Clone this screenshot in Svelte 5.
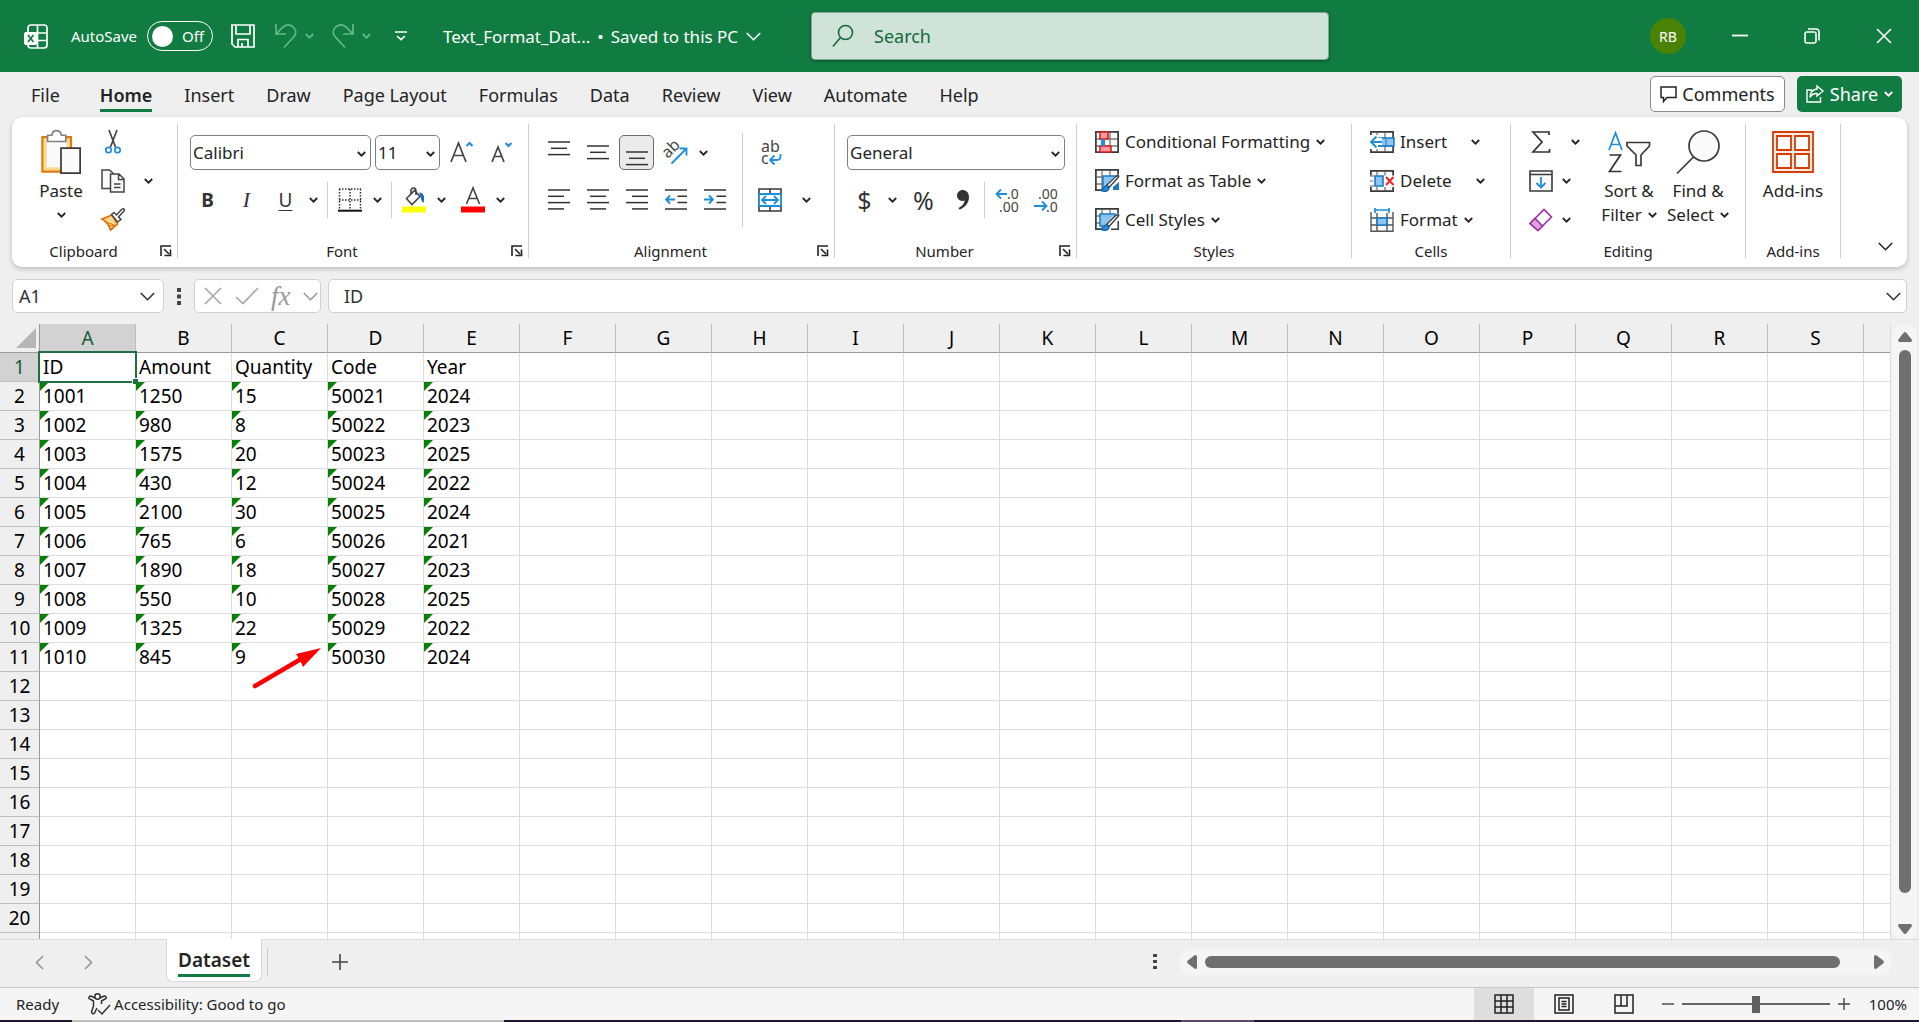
<script lang="ts">
    const tabs = ["File", "Home", "Insert", "Draw", "Page Layout", "Formulas", "Data", "Review", "View", "Automate", "Help"];
    const columns = "ABCDEFGHIJKLMNOPQRST".split("");
    const data = [
        ["ID", "Amount", "Quantity", "Code", "Year"],
        ["1001", "1250", "15", "50021", "2024"],
        ["1002", "980", "8", "50022", "2023"],
        ["1003", "1575", "20", "50023", "2025"],
        ["1004", "430", "12", "50024", "2022"],
        ["1005", "2100", "30", "50025", "2024"],
        ["1006", "765", "6", "50026", "2021"],
        ["1007", "1890", "18", "50027", "2023"],
        ["1008", "550", "10", "50028", "2025"],
        ["1009", "1325", "22", "50029", "2022"],
        ["1010", "845", "9", "50030", "2024"],
    ];
    const rows = Array.from({ length: 21 }, (_, i) => i);

    let activeTab = $state("Home");
    let selected = $state({ row: 0, col: 0 });
    let autosave = $state(false);
    let zoom = $state(50);

    let cellName = $derived(columns[selected.col] + (selected.row + 1));
    let cellValue = $derived(data[selected.row]?.[selected.col] ?? "");
</script>

{#snippet chevron()}
    <svg class="chev" width="9" height="6" viewBox="0 0 9 6"><path d="M.8 1 4.5 4.7 8.2 1" /></svg>
{/snippet}

{#snippet bigChevron()}
    <svg class="chev thin" width="15" height="9" viewBox="0 0 15 9"><path d="M.8 1 7.5 7.7 14.2 1" /></svg>
{/snippet}

{#snippet drop(label: string)}
    <button class="drop" aria-label="{label} options">{@render chevron()}</button>
{/snippet}

{#snippet footer(label: string, launcher: boolean)}
    <div class="footer">
        <span>{label}</span>
        {#if launcher}
            <button class="launcher" aria-label="{label} settings">
                <svg width="12" height="12" viewBox="0 0 12 12"><path d="M1 11V1H11M4 4 9 9M10.5 4.5V10.5H4.5" fill="none" stroke="#222" stroke-width="1.6" /></svg>
            </button>
        {/if}
    </div>
{/snippet}

{#snippet lines(y: number, widths: number[], align: string)}
    <svg width="22" height="24" viewBox="0 0 22 24" stroke="#333" stroke-width="1.5">
        {#each widths as w, i}
            {@const x = align === "left" ? 0 : align === "right" ? 22 - w : (22 - w) / 2}
            <path d="M{x} {y + i * 6.3}h{w}" />
        {/each}
    </svg>
{/snippet}

{#snippet tableGrid()}
    <path d="M1 1H23V21H1ZM7 1V21M15 1V21M1 8H23M1 15H23" fill="#fafafa" stroke="#777" stroke-width="1.3" />
    <path d="M.8.8H23.2V21.2H.8Z" fill="none" stroke="#3a3a3a" stroke-width="1.5" />
{/snippet}

{#snippet brushOver()}
    <path d="M24 5 12 17 6 24H24Z" fill="#fff" />
    <path d="M23.4 8.2 14 18.5 11.7 16.2 20.5 7.9C22.5 6.3 24.7 6.3 23.4 8.2Z" fill="#fff" stroke="#3a3a3a" stroke-width="1.3" />
    <path d="M11.4 16.5C8.5 16.8 9.5 20.2 5.8 21.4 9.5 23.2 14 22.5 14 18.8Z" fill="#2b8ad4" stroke="#0f62ad" stroke-width="1.2" />
{/snippet}

<div class="app">
    <header class="title-bar">
        <div class="quick">
            <svg class="logo" width="24" height="25" viewBox="0 0 24 25" fill="none" stroke="#fff" stroke-width="1.7">
                <path d="M4 8V4Q4 1 7 1H20Q23 1 23 4V21Q23 24 20 24H7Q4 24 4 21M4 9H23M13.5 1V24M13 16.5H23" />
                <rect x="0" y="8" width="13" height="13" rx="2" fill="#fff" stroke="none" />
                <path d="M4 11 9.5 18M9.5 11 4 18" stroke="#107c41" />
            </svg>
            <label class="autosave">
                <span>AutoSave</span>
                <input type="checkbox" bind:checked={autosave} />
                <span class="toggle" class:on={autosave}><span class="knob"></span>{autosave ? "On" : "Off"}</span>
            </label>
            <button class="save" aria-label="Save">
                <svg width="24" height="24" viewBox="0 0 24 24" fill="none" stroke="#fff" stroke-width="1.7"><path d="M1 1H23V23H4L1 20ZM5 1V10H19V1M7 23V15.5H17V23M11 19v4" /></svg>
            </button>
            <div class="history">
                <button aria-label="Undo">
                    <svg width="22" height="24" viewBox="0 0 22 24" fill="none" stroke="#63b887" stroke-width="1.7"><path d="M1 0V10H11M1.5 9.5 8 3C15-2.5 24 5 19.5 12L9 23.5" /></svg>
                </button>
                <button aria-label="Undo history">{@render chevron()}</button>
            </div>
            <div class="history">
                <button aria-label="Redo">
                    <svg width="22" height="24" viewBox="0 0 22 24" fill="none" stroke="#63b887" stroke-width="1.7"><path d="M21 0V10H11M20.5 9.5 14 3C7-2.5-2 5 2.5 12L13 23.5" /></svg>
                </button>
                <button aria-label="Redo history">{@render chevron()}</button>
            </div>
            <button class="customize" aria-label="Customize toolbar">
                <svg width="12" height="10" viewBox="0 0 12 10" fill="none" stroke="#fff" stroke-width="1.7"><path d="M0 1H12M2 5 6 8.7 10 5" /></svg>
            </button>
            <button class="file-name">
                <span>Text_Format_Dat...</span>
                <span>•</span>
                <span class="saved">Saved to this PC {@render bigChevron()}</span>
            </button>
        </div>
        <label class="search">
            <svg width="22" height="24" viewBox="0 0 22 24" fill="none" stroke="#17693c" stroke-width="1.6"><circle cx="13.5" cy="8.5" r="7" /><path d="M8.5 13.5 1 22.5" /></svg>
            <input type="text" placeholder="Search" aria-label="Search" />
        </label>
        <div class="window">
            <button class="avatar">RB</button>
            <button aria-label="Minimize"><svg width="16" height="16" viewBox="0 0 16 16"><path d="M0 7.5H16" stroke="#fff" stroke-width="1.8" /></svg></button>
            <button aria-label="Restore">
                <svg width="16" height="16" viewBox="0 0 16 16" fill="none" stroke="#fff" stroke-width="1.6"><rect x="1" y="4" width="11" height="11" rx="2" /><path d="M4 1H12Q15 1 15 4V12.5" /></svg>
            </button>
            <button aria-label="Close"><svg width="16" height="16" viewBox="0 0 16 16"><path d="M1 1 15 15M15 1 1 15" stroke="#fff" stroke-width="1.6" /></svg></button>
        </div>
    </header>

    <nav class="tabs">
        {#each tabs as tab}
            <button class="tab" class:active={tab === activeTab} onclick={() => (activeTab = tab)}><span>{tab}</span></button>
        {/each}
        <button class="comments">
            <svg width="17" height="17" viewBox="0 0 17 17" fill="none" stroke="#222" stroke-width="1.5"><path d="M1 1H16V11.5H7L3.5 15.5V11.5H1Z" /></svg>
            Comments
        </button>
        <button class="share">
            <svg width="18" height="18" viewBox="0 0 18 18" fill="none" stroke="#fff" stroke-width="1.4"><path d="M6 5H1V17H14.5V12M11 1 17 6 11 11V8.5Q6.5 8 4 12.5 4.5 4.5 11 4Z" /></svg>
            Share
            {@render chevron()}
        </button>
    </nav>

    <div class="ribbon">
        <section class="group clipboard">
            <div class="body">
                <button class="big paste">
                    <svg width="42" height="46" viewBox="0 0 42 46">
                        <path d="M1.5 7.5H31.5V43.5H1.5Z" fill="#fbd98d" stroke="#e07a10" stroke-width="2.2" />
                        <path d="M6 11H27V39H6Z" fill="#fafafa" />
                        <path d="M7 12V5.5H11.5C12-1 20.5-1 21.5 5.5H26V12Z" fill="#fff" stroke="#808080" stroke-width="1.7" />
                        <path d="M21 19H41V45H21Z" fill="#fafafa" stroke="#3a3a3a" stroke-width="1.8" />
                    </svg>
                    <span>Paste</span>
                    {@render chevron()}
                </button>
                <div class="stack">
                    <button class="item" aria-label="Cut">
                        <svg width="24" height="24" viewBox="0 0 24 24" fill="none"><path d="M8 0 14.5 17M16 0 9.5 17" stroke="#444" stroke-width="1.7" /><circle cx="7.5" cy="20" r="2.7" stroke="#1e8ed8" stroke-width="1.7" /><circle cx="16.5" cy="20" r="2.7" stroke="#1e8ed8" stroke-width="1.7" /></svg>
                    </button>
                    <div class="item">
                        <button aria-label="Copy">
                            <svg width="24" height="24" viewBox="0 0 24 24" fill="#fafafa" stroke="#444" stroke-width="1.5"><path d="M9 19.5H1V1H8.5L13 5" /><path d="M9.5 5H18L23 10V23H9.5ZM17.5 5V10.5H23M13 15H19.5M13 18.5H19.5" /></svg>
                        </button>
                        <button class="pad" aria-label="Copy options">{@render chevron()}</button>
                    </div>
                    <button class="item" aria-label="Format painter">
                        <svg width="24" height="23" viewBox="0 0 24 23"><path d="M1 11 11 7 16.5 16 9.5 22Q7 14 1 11Z" fill="#fbd98d" stroke="#df6f0d" stroke-width="1.7" /><path d="M4 13.5 13 17M8 18 14 17.5" stroke="#df6f0d" fill="none" /><path d="M10.5 6.5 13 4.5 15.5 7 20.5 1.5C23-.5 24.5 2 22.5 3.5L17.5 9 20 11.5 16.5 14Z" fill="#fff" stroke="#444" stroke-width="1.5" /></svg>
                    </button>
                </div>
            </div>
            {@render footer("Clipboard", true)}
        </section>
        <div class="sep"></div>

        <section class="group font">
            <div class="body rows">
                <div class="row">
                    <div class="select face">
                        <select aria-label="Font"><option>Calibri</option></select>
                        {@render chevron()}
                    </div>
                    <div class="select size">
                        <select aria-label="Font size"><option>11</option></select>
                        {@render chevron()}
                    </div>
                    <button class="icon" aria-label="Increase font size">
                        <svg width="24" height="24" viewBox="0 0 24 24" fill="none" stroke-width="1.7"><path d="M1 21 8.5 2 16 21M3.5 14.5H13.5" stroke="#444" /><path d="M16.5 5 19.5 2 22.5 5" stroke="#1e8ed8" stroke-width="2" /></svg>
                    </button>
                    <button class="icon" aria-label="Decrease font size">
                        <svg width="24" height="24" viewBox="0 0 24 24" fill="none" stroke-width="1.7"><path d="M3 21 9 6 15 21M5 15.5H13" stroke="#444" /><path d="M16.5 2 19.5 5 22.5 2" stroke="#1e8ed8" stroke-width="2" /></svg>
                    </button>
                </div>
                <div class="row">
                    <button class="icon bold">B</button>
                    <button class="icon italic">I</button>
                    <div class="split"><button class="icon underline">U</button>{@render drop("Underline")}</div>
                    <div class="bar"></div>
                    <div class="split">
                        <button class="icon" aria-label="Borders">
                            <svg width="24" height="24" viewBox="0 0 24 24" fill="none" stroke="#333"><path d="M1 1H23M1 12H23M1.5 1V21M12 1V21M22.5 1V21" stroke-width="1.5" stroke-dasharray="1.5 1.5" /><path d="M0 22.7H24" stroke="#111" stroke-width="2" /></svg>
                        </button>
                        {@render drop("Borders")}
                    </div>
                    <div class="bar"></div>
                    <div class="split">
                        <button class="icon" aria-label="Fill color">
                            <svg width="24" height="26" viewBox="0 0 24 26"><path d="M0 19.5H24V25.5H0Z" fill="#ff0" /><path d="M4.5 11.5 12.5 3.5 18 9.5 10 17.5ZM9 7V4C9 0 14 0 14 4V8" fill="none" stroke="#444" stroke-width="1.6" /><path d="M17 5.5C21.5 5.5 23 9 21.5 16 19.5 14.5 19 12 18.5 9Z" fill="#0f6cbd" /></svg>
                        </button>
                        {@render drop("Fill color")}
                    </div>
                    <div class="split">
                        <button class="icon" aria-label="Font color">
                            <svg width="24" height="26" viewBox="0 0 24 26"><path d="M0 19.5H24V25.5H0Z" fill="#f00" /><path d="M5.5 17 12 1 18.5 17M8 11.5H16" fill="none" stroke="#444" stroke-width="1.6" /></svg>
                        </button>
                        {@render drop("Font color")}
                    </div>
                </div>
            </div>
            {@render footer("Font", true)}
        </section>
        <div class="sep"></div>

        <section class="group alignment">
            <div class="body">
                <div class="rows">
                    <div class="row">
                        <button class="icon" aria-label="Top align">{@render lines(1, [22, 16, 22], "center")}</button>
                        <button class="icon" aria-label="Middle align">{@render lines(5, [22, 16, 22], "center")}</button>
                        <button class="icon pressed" aria-label="Bottom align">{@render lines(11, [22, 16, 22], "center")}</button>
                        <div class="split">
                            <button class="icon" aria-label="Orientation">
                                <svg width="25" height="24" viewBox="0 0 25 24"><text x="3" y="18" transform="rotate(-45 4 16)" class="glyph">ab</text><path d="M8.5 22.5 23 8M16.5 7.5H23.5V14.5" fill="none" stroke="#1e8ed8" stroke-width="1.8" /></svg>
                            </button>
                            {@render drop("Orientation")}
                        </div>
                    </div>
                    <div class="row">
                        <button class="icon" aria-label="Align left">{@render lines(2, [22, 16, 22, 16], "left")}</button>
                        <button class="icon" aria-label="Center">{@render lines(2, [22, 16, 22, 16], "center")}</button>
                        <button class="icon" aria-label="Align right">{@render lines(2, [22, 16, 22, 16], "right")}</button>
                        <button class="icon" aria-label="Decrease indent">
                            <svg width="22" height="24" viewBox="0 0 22 24" fill="none" stroke="#333" stroke-width="1.5"><path d="M0 2H22M12.5 8.3H22M12.5 14.6H22M0 21H22" /><path d="M10 11.5H1M5 7.5 1 11.5 5 15.5" stroke="#1e8ed8" stroke-width="1.8" /></svg>
                        </button>
                        <button class="icon" aria-label="Increase indent">
                            <svg width="22" height="24" viewBox="0 0 22 24" fill="none" stroke="#333" stroke-width="1.5"><path d="M0 2H22M12.5 8.3H22M12.5 14.6H22M0 21H22" /><path d="M0 11.5H9M5 7.5 9 11.5 5 15.5" stroke="#1e8ed8" stroke-width="1.8" /></svg>
                        </button>
                    </div>
                </div>
                <div class="bar tall"></div>
                <div class="rows">
                    <div class="row">
                        <button class="icon" aria-label="Wrap text">
                            <svg width="22" height="26" viewBox="0 0 22 26"><text x="2" y="12" class="glyph">ab</text><text x="2" y="24" class="glyph">c</text><path d="M21.500 14V16Q21.500 20 18 20H11.500M15.500 15.500 11 20 15.500 24.500" fill="none" stroke="#1e8ed8" stroke-width="1.8" /></svg>
                        </button>
                    </div>
                    <div class="row">
                        <button class="icon" aria-label="Merge and center">
                            <svg width="24" height="24" viewBox="0 0 24 24" fill="none"><path d="M1 1H23V23H1ZM12 1V23" stroke="#3a3a3a" stroke-width="1.6" /><path d="M1 6H23V18H1Z" fill="#fff" stroke="#1e8ed8" stroke-width="1.8" /><path d="M4 12H20M8 8 4 12 8 16M16 8 20 12 16 16" stroke="#1e8ed8" stroke-width="1.8" /></svg>
                        </button>
                        {@render drop("Merge")}
                    </div>
                </div>
            </div>
            {@render footer("Alignment", true)}
        </section>
        <div class="sep"></div>

        <section class="group number">
            <div class="body rows">
                <div class="row">
                    <div class="select format">
                        <select aria-label="Number format"><option>General</option></select>
                        {@render chevron()}
                    </div>
                </div>
                <div class="row">
                    <div class="split"><button class="icon symbol">$</button>{@render drop("Currency")}</div>
                    <button class="icon symbol">%</button>
                    <button class="icon" aria-label="Comma style">
                        <svg width="12" height="20" viewBox="0 0 12 20"><path d="M5.5 0C9 0 12 2.5 12 7 12 13 8 17.5 2.5 19.5L1.5 18C5 16.5 7.5 13.5 7.5 10.5 3.5 12 0 9 0 5.5 0 2.5 2.5 0 5.5 0Z" fill="#333" /></svg>
                    </button>
                    <div class="bar"></div>
                    <button class="icon" aria-label="Increase decimal">
                        <svg width="24" height="26" viewBox="0 0 24 26"><text x="12" y="12" class="glyph small">.0</text><text x="4" y="25" class="glyph small">.00</text><path d="M12 7H1.5M6 2.5 1.5 7 6 11.5" fill="none" stroke="#1e8ed8" stroke-width="1.8" /></svg>
                    </button>
                    <button class="icon" aria-label="Decrease decimal">
                        <svg width="24" height="26" viewBox="0 0 24 26"><text x="4" y="12" class="glyph small">.00</text><text x="12" y="25" class="glyph small">.0</text><path d="M0 19H12M8 14.5 12.5 19 8 23.5" fill="none" stroke="#1e8ed8" stroke-width="1.8" /></svg>
                    </button>
                </div>
            </div>
            {@render footer("Number", true)}
        </section>
        <div class="sep"></div>

        <section class="group styles">
            <div class="body stack">
                <button class="item">
                    <svg width="24" height="22" viewBox="0 0 24 22">{@render tableGrid()}<path d="M5 1H13V8H5ZM5 15H16V21H5Z" fill="#ff9aa0" stroke="#dc1f1f" stroke-width="1.6" /><path d="M6 8H10V15H6Z" fill="#2b8ad4" /></svg>
                    Conditional Formatting {@render chevron()}
                </button>
                <button class="item">
                    <svg width="24" height="24" viewBox="0 0 24 24">{@render tableGrid()}<path d="M8 7H23V21H8Z" fill="#8cc4f2" stroke="#1779c9" stroke-width="1.5" />{@render brushOver()}<path d="M18 21V18L24 13V21Z" fill="#1779c9" /></svg>
                    Format as Table {@render chevron()}
                </button>
                <button class="item">
                    <svg width="24" height="24" viewBox="0 0 24 24">{@render tableGrid()}<path d="M5 6H20V18H5Z" fill="#8cc4f2" stroke="#1779c9" stroke-width="1.5" />{@render brushOver()}<path d="M23.2 13V21.2H16" fill="none" stroke="#3a3a3a" stroke-width="1.5" /></svg>
                    Cell Styles {@render chevron()}
                </button>
            </div>
            {@render footer("Styles", false)}
        </section>
        <div class="sep"></div>

        <section class="group cells">
            <div class="body stack">
                <div class="item">
                    <button class="item">
                        <svg width="24" height="22" viewBox="0 0 24 22">{@render tableGrid()}<path d="M9 7H24V15H9Z" fill="#8cc4f2" stroke="#1779c9" stroke-width="1.5" /><path d="M16 7V15" stroke="#1779c9" /><path d="M0 4H8V7H12V14H8V18H0Z" fill="#fff" /><path d="M12 11H1.5M6.5 5.5 1 11 6.5 16.5" fill="none" stroke="#1e8ed8" stroke-width="2" /></svg>
                        Insert
                    </button>
                    <button class="pad" aria-label="Insert options">{@render chevron()}</button>
                </div>
                <div class="item">
                    <button class="item">
                        <svg width="24" height="22" viewBox="0 0 24 22">{@render tableGrid()}<path d="M0 5.5H24V17H0Z" fill="#fff" /><path d="M5 6H13V16H5Z" fill="#8cc4f2" stroke="#1779c9" stroke-width="1.6" /><path d="M0 11H3M0 6H4M0 16H4" stroke="#666" /><path d="M16 7 23.5 15M23.5 7 16 15" stroke="#e22" stroke-width="1.9" /></svg>
                        Delete
                    </button>
                    <button class="pad" aria-label="Delete options">{@render chevron()}</button>
                </div>
                <button class="item">
                    <svg width="24" height="24" viewBox="0 0 24 24"><path d="M1 4V23.2H23V4M7 5V23M17 5V23M1 10H23M1 17H23" fill="#fafafa" stroke="#555" stroke-width="1.4" /><path d="M7 10H17V17H7Z" fill="#8cc4f2" stroke="#1779c9" stroke-width="1.6" /><path d="M5 2H19M5 0V5M19 0V5" stroke="#1e8ed8" stroke-width="1.7" /></svg>
                    Format {@render chevron()}
                </button>
            </div>
            {@render footer("Cells", false)}
        </section>
        <div class="sep"></div>

        <section class="group editing">
            <div class="body">
                <div class="stack">
                    <div class="item sum">
                        <button aria-label="AutoSum"><svg width="24" height="22" viewBox="0 0 24 22"><path d="M20 4V1H4L13 11 4 21H20.5V18" fill="none" stroke="#333" stroke-width="1.7" /></svg></button>
                        <button class="pad" aria-label="AutoSum options">{@render chevron()}</button>
                    </div>
                    <div class="item">
                        <button aria-label="Fill"><svg width="24" height="22" viewBox="0 0 24 22" fill="none"><path d="M1 1H23V21H1ZM1 4.5H23" fill="#fafafa" stroke="#3a3a3a" stroke-width="1.6" /><path d="M12 7V17.5M7.5 13 12 17.5 16.5 13" stroke="#1e8ed8" stroke-width="1.8" /></svg></button>
                        <button class="pad" aria-label="Fill options">{@render chevron()}</button>
                    </div>
                    <div class="item">
                        <button aria-label="Clear"><svg width="24" height="24" viewBox="0 0 24 24" stroke="#9b2fa0" stroke-width="1.6"><path d="M1 15.5 15 1.5 22.5 9 9 22.5Z" fill="#fff" /><path d="M1 15.5 6 10.5 13.5 18 9 22.5Z" fill="#dfa3e2" /></svg></button>
                        <button class="pad" aria-label="Clear options">{@render chevron()}</button>
                    </div>
                </div>
                <button class="big">
                    <svg width="42" height="42" viewBox="0 0 42 42" fill="none" stroke-width="1.7"><path d="M1 19 7.5 2 14 19M3.5 13.5H11.5" stroke="#1e8ed8" /><path d="M1.5 24H12.5L1.5 40.5H13.5" stroke="#333" /><path d="M19 11.5H41.5V15L33 24V34.5H28V24L19 15Z" fill="#fafafa" stroke="#3a3a3a" /></svg>
                    <span>Sort &amp;</span>
                    <span>Filter {@render chevron()}</span>
                </button>
                <button class="big">
                    <svg width="44" height="44" viewBox="0 0 44 44" stroke="#3a3a3a" stroke-width="1.7"><circle cx="28" cy="16" r="15" fill="#fafafa" /><path d="M17.5 27 1 43.5" /></svg>
                    <span>Find &amp;</span>
                    <span>Select {@render chevron()}</span>
                </button>
            </div>
            {@render footer("Editing", false)}
        </section>
        <div class="sep"></div>

        <section class="group addins">
            <div class="body">
                <button class="big">
                    <svg width="42" height="42" viewBox="0 0 42 42" fill="#fff" stroke="#d83b01" stroke-width="1.8"><path d="M1 1H41V41H1Z" fill="#fbe9e2" /><path d="M5 5H19V19H5ZM23 5H37V19H23ZM5 23H19V37H5ZM23 23H37V37H23Z" /></svg>
                    <span>Add-ins</span>
                </button>
            </div>
            {@render footer("Add-ins", false)}
        </section>
        <div class="sep"></div>
        <button class="collapse" aria-label="Collapse ribbon">{@render bigChevron()}</button>
    </div>

    <div class="formula-bar">
        <div class="box name-box">
            <input type="text" value={cellName} aria-label="Name box" />
            <button aria-label="Names">{@render bigChevron()}</button>
        </div>
        <svg class="dots" width="4" height="17" viewBox="0 0 4 17"><path d="M0 0H4V4H0ZM0 6.5H4V10.5H0ZM0 13H4V17H0Z" fill="#444" /></svg>
        <div class="box fx">
            <button aria-label="Cancel"><svg width="18" height="18" viewBox="0 0 18 18"><path d="M1 1 17 17M17 1 1 17" stroke="#aaa" stroke-width="1.7" /></svg></button>
            <button aria-label="Enter"><svg width="24" height="18" viewBox="0 0 24 18"><path d="M1 10 8 16.5 23 1" fill="none" stroke="#aaa" stroke-width="1.7" /></svg></button>
            <button class="function">fx</button>
            <button aria-label="Functions">{@render bigChevron()}</button>
        </div>
        <div class="box formula">
            <input type="text" value={cellValue} aria-label="Formula" />
            <button aria-label="Expand formula bar">{@render bigChevron()}</button>
        </div>
    </div>

    <main class="workbook">
        <div class="sheet">
            <table>
                <thead>
                    <tr>
                        <th class="corner"><svg width="20" height="20" viewBox="0 0 20 20"><path d="M20 0V20H0Z" fill="#b7b7b7" /></svg></th>
                        {#each columns as column, c}
                            <th class:current={c === selected.col}>{column}</th>
                        {/each}
                    </tr>
                </thead>
                <tbody>
                    {#each rows as r}
                        <tr>
                            <th class:current={r === selected.row}>{r + 1}</th>
                            {#each columns as _, c}
                                <td
                                    class:selected={r === selected.row && c === selected.col}
                                    class:warned={r > 0 && data[r]?.[c]}
                                    onclick={() => (selected = { row: r, col: c })}
                                >{data[r]?.[c] ?? ""}</td>
                            {/each}
                        </tr>
                    {/each}
                </tbody>
            </table>
            <svg class="pointer" width="70" height="42" viewBox="0 0 70 42"><path d="M4 39 50 12" stroke="#f00" stroke-width="4.5" stroke-linecap="round" /><path d="M45 7 70 1 52 20 49 13Z" fill="#f00" /></svg>
        </div>
        <div class="scroll vertical">
            <svg width="14" height="10" viewBox="0 0 14 10"><path d="M7 0Q8 0 9 1.5L14 8Q14 10 12.5 10H1.5Q0 10 0 8L5 1.5Q6 0 7 0Z" /></svg>
            <div class="thumb"></div>
            <svg class="end" width="14" height="10" viewBox="0 0 14 10"><path d="M7 10Q8 10 9 8.5L14 2Q14 0 12.5 0H1.5Q0 0 0 2L5 8.5Q6 10 7 10Z" /></svg>
        </div>
    </main>

    <div class="sheet-tabs">
        <button class="arrow" aria-label="Previous sheet"><svg width="9" height="15" viewBox="0 0 9 15"><path d="M8 1 1.5 7.5 8 14" fill="none" stroke="#999" stroke-width="1.7" /></svg></button>
        <button class="arrow" aria-label="Next sheet"><svg width="9" height="15" viewBox="0 0 9 15"><path d="M1 1 7.5 7.5 1 14" fill="none" stroke="#999" stroke-width="1.7" /></svg></button>
        <button class="sheet-tab"><span>Dataset</span></button>
        <div class="tab-line"></div>
        <button class="add" aria-label="New sheet"><svg width="18" height="18" viewBox="0 0 18 18"><path d="M9 1V17M1 9H17" stroke="#444" stroke-width="1.6" /></svg></button>
        <svg class="dots" width="4" height="16" viewBox="0 0 4 16"><path d="M0 0H4V3H0ZM0 6H4V9H0ZM0 12H4V15H0Z" fill="#444" /></svg>
        <div class="scroll horizontal">
            <svg width="10" height="14" viewBox="0 0 10 14"><path d="M0 7Q0 6 1.5 5L8 0Q10 0 10 1.5V12.5Q10 14 8 14L1.5 9Q0 8 0 7Z" /></svg>
            <div class="thumb"></div>
            <svg width="10" height="14" viewBox="0 0 10 14"><path d="M10 7Q10 6 8.5 5L2 0Q0 0 0 1.5V12.5Q0 14 2 14L8.5 9Q10 8 10 7Z" /></svg>
        </div>
    </div>

    <footer class="status">
        <span class="ready">Ready</span>
        <button class="access">
            <svg width="23" height="22" viewBox="0 0 23 22" fill="none" stroke="#333" stroke-width="1.5"><circle cx="9.5" cy="3.5" r="2.7" /><path d="M7 5 3 3Q.5 3 1 5.5L5.5 8V13L3.5 19Q4.5 22 6.5 20L9 15M12 5 16 3Q19 3 18 5.5L13.5 8V11M10 17 14 21 22 12" /></svg>
            Accessibility: Good to go
        </button>
        <div class="views">
            <button class="active" aria-label="Normal view"><svg width="20" height="20" viewBox="0 0 20 20" fill="none" stroke="#222" stroke-width="1.5"><path d="M1 1H19V19H1ZM7 1V19M13 1V19M1 7H19M1 13H19" /></svg></button>
            <button aria-label="Page layout view"><svg width="20" height="20" viewBox="0 0 20 20" fill="none" stroke="#222" stroke-width="1.5"><path d="M1 1H19V19H1ZM5 4H15V16H5ZM7.5 7.5H12.5M7.5 10H12.5M7.5 12.5H12.5" /></svg></button>
            <button aria-label="Page break view"><svg width="20" height="20" viewBox="0 0 20 20" fill="none" stroke="#222" stroke-width="1.5"><path d="M1 1H19V19H1ZM1 12H13V1M7 1V12" /></svg></button>
        </div>
        <div class="zoom">
            <button aria-label="Zoom out"><svg width="12" height="12" viewBox="0 0 12 12"><path d="M0 6H12" stroke="#444" stroke-width="1.4" /></svg></button>
            <input type="range" min="0" max="100" bind:value={zoom} aria-label="Zoom" />
            <button aria-label="Zoom in"><svg width="12" height="12" viewBox="0 0 12 12"><path d="M0 6H12M6 0V12" stroke="#444" stroke-width="1.4" /></svg></button>
        </div>
        <span class="percent">100%</span>
    </footer>
    <div class="taskbar"><div class="preview"></div><div class="glow"></div></div>
</div>

<style>
    :global(body) {
        margin: 0;
        overflow: hidden;
    }

    .app {
        height: 100vh;
        display: flex;
        flex-direction: column;
        background: #efefef;
        color: #242424;
        font-family: "Noto Sans", "Open Sans", sans-serif;
        font-size: 17px;
    }

    button, input, select {
        font: inherit;
        color: inherit;
        background: none;
        border: 0;
        padding: 0;
        margin: 0;
        outline: none;
    }

    button {
        display: flex;
        align-items: center;
        justify-content: center;
        white-space: nowrap;
        flex: none;
    }

    svg {
        flex: none;
        display: block;
        overflow: visible;
    }

    .chev {
        fill: none;
        stroke: currentColor;
        stroke-width: 1.8;
    }

    .chev.thin {
        stroke-width: 1.6;
    }

    .glyph {
        font-size: 16px;
        fill: #444;
    }

    .glyph.small {
        font-size: 14px;
    }

    /* title bar */
    .title-bar {
        height: 72px;
        flex: none;
        display: flex;
        align-items: center;
        background: #107c41;
        color: #fff;
    }

    .quick {
        width: 811px;
        flex: none;
        display: flex;
        align-items: center;
        box-sizing: border-box;
        padding-left: 24px;
    }

    .autosave {
        display: flex;
        align-items: center;
        gap: 10px;
        margin: 0 18px 0 23px;
        font-size: 15px;
    }

    .autosave input {
        position: absolute;
        opacity: 0;
    }

    .toggle {
        box-sizing: border-box;
        width: 66px;
        height: 30px;
        display: flex;
        align-items: center;
        gap: 9px;
        padding-left: 4px;
        border: 1px solid #fff;
        border-radius: 15px;
    }

    .toggle.on {
        flex-direction: row-reverse;
    }

    .knob {
        width: 21px;
        height: 21px;
        border-radius: 50%;
        background: #fff;
    }

    .save {
        margin-right: 20px;
    }

    .history {
        display: flex;
        align-items: center;
        gap: 8px;
        margin-right: 18px;
        color: #63b887;
    }

    .customize {
        margin: 0 36px 0 6px;
    }

    .file-name {
        gap: 7px;
    }

    .saved {
        display: flex;
        align-items: center;
        gap: 8px;
    }

    .search {
        flex: 0 1 518px;
        height: 48px;
        box-sizing: border-box;
        display: flex;
        align-items: center;
        gap: 20px;
        padding: 0 20px;
        border: 1px solid #85a894;
        border-radius: 4px;
        background: #cfe3d8;
        box-shadow: 0 1px 3px rgba(0, 0, 0, 0.4);
        color: #17693c;
        font-size: 18px;
    }

    .search input {
        flex: 1;
        min-width: 0;
    }

    .search input::placeholder {
        color: #17693c;
        opacity: 1;
    }

    .window {
        margin-left: auto;
        display: flex;
        align-items: center;
        gap: 56px;
        padding-right: 27px;
    }

    .avatar {
        width: 36px;
        height: 36px;
        margin-right: -10px;
        border-radius: 50%;
        background: #498205;
        font-size: 14px;
    }

    /* tab strip */
    .tabs {
        height: 45px;
        flex: none;
        display: flex;
        align-items: flex-start;
        padding: 0 17px 0 15px;
        font-size: 18px;
    }

    .tab {
        height: 42px;
        padding: 6px 16px 0;
        align-items: flex-start;
    }

    .tab span {
        line-height: 34px;
        box-shadow: 0 0 0 transparent;
    }

    .tab:first-child {
        margin-right: 8px;
    }

    .tab.active {
        font-weight: 600;
    }

    .tab.active span {
        background: linear-gradient(#107c41, #107c41) bottom / 100% 3px no-repeat;
    }

    .comments, .share {
        box-sizing: border-box;
        height: 36px;
        margin-top: 4px;
        border-radius: 5px;
    }

    .comments {
        width: 135px;
        margin-left: auto;
        gap: 5px;
        border: 1px solid #8a8a8a;
        background: #fff;
    }

    .share {
        width: 105px;
        margin-left: 12px;
        gap: 6px;
        background: #107c41;
        color: #fff;
    }

    /* ribbon */
    .ribbon {
        flex: none;
        display: flex;
        height: 145px;
        margin: 0 12px 12px;
        padding-top: 5px;
        border-radius: 10px;
        background: #fff;
        box-shadow: 0 2px 5px rgba(0, 0, 0, 0.22);
    }

    .group {
        flex: none;
        box-sizing: border-box;
        display: flex;
        flex-direction: column;
    }

    .clipboard { width: 165px; }
    .font { width: 350px; }
    .alignment { width: 305px; }
    .number { width: 241px; }
    .styles { width: 274px; }
    .cells { width: 158px; }
    .editing { width: 234px; }
    .addins { width: 94px; }

    .sep, .bar {
        flex: none;
        width: 1px;
        background: #cdcdcd;
    }

    .sep {
        height: 134px;
        margin-top: 2px;
    }

    .bar {
        height: 36px;
    }

    .bar.tall {
        height: 94px;
        margin: 11px 9px 0 10px;
    }

    .body {
        display: flex;
        flex: 1;
        min-height: 0;
    }

    .clipboard .body {
        padding-left: 25px;
        gap: 16px;
    }

    .font .body, .alignment .body, .number .body {
        padding-left: 12px;
    }

    .styles .body, .cells .body, .editing .body {
        padding-left: 18px;
    }

    .addins .body {
        justify-content: center;
    }

    .rows {
        display: flex;
        flex-direction: column;
    }

    .body.rows, .body .rows {
        padding-top: 7px;
    }

    .row {
        height: 47px;
        display: flex;
        align-items: center;
        gap: 4px;
    }

    .split {
        display: flex;
        align-items: center;
    }

    .stack {
        display: flex;
        flex-direction: column;
        align-items: flex-start;
    }

    .item {
        height: 39px;
        display: flex;
        align-items: center;
        gap: 6px;
        line-height: 24px;
    }

    .stack .pad {
        padding-left: 13px;
    }

    .cells .stack .pad {
        padding-left: 18px;
    }

    .editing .stack .pad {
        padding: 0 28px 0 3px;
    }

    .editing .stack .sum .pad {
        padding: 0 12px;
    }

    .icon {
        width: 35px;
        height: 35px;
        box-sizing: border-box;
        color: #333;
    }

    .icon.pressed {
        border: 1px solid #6a6a6a;
        border-radius: 5px;
        background: #ebebeb;
    }

    .drop {
        width: 20px;
        height: 35px;
    }

    .row > .drop {
        margin-left: 5px;
    }

    .bold {
        font-size: 19px;
        font-weight: 700;
    }

    .italic {
        font-family: "Liberation Serif", serif;
        font-size: 22px;
        font-style: italic;
    }

    .underline {
        font-size: 19px;
        text-decoration: underline;
        text-underline-offset: 3px;
    }

    .symbol {
        font-size: 25px;
    }

    .select {
        position: relative;
        height: 35px;
        box-sizing: border-box;
        border: 1px solid #7f7f7f;
        border-radius: 5px;
    }

    .select.face { width: 181px; }
    .select.size { width: 65px; }
    .select.format { width: 218px; }

    .select select {
        appearance: none;
        width: 100%;
        height: 100%;
        padding-left: 2px;
        font-size: 17px;
    }

    .select .chev {
        position: absolute;
        right: 4px;
        top: 15px;
        pointer-events: none;
    }

    .big {
        flex-direction: column;
        justify-content: flex-start;
        min-width: 60px;
        padding-top: 8px;
    }

    .big > svg:first-child {
        height: 44px;
        margin-bottom: 5px;
    }

    .big span {
        display: flex;
        align-items: center;
        gap: 6px;
        line-height: 24px;
    }

    .editing .big + .big {
        margin-left: 8px;
    }

    .big.paste {
        min-width: 48px;
    }

    .paste > .chev {
        margin-top: 9px;
    }

    .footer {
        height: 20px;
        display: flex;
        align-items: center;
        margin-bottom: 6px;
        font-size: 15px;
        line-height: 20px;
    }

    .footer span {
        flex: 1;
        text-align: center;
    }

    .launcher {
        width: 22px;
    }

    .collapse {
        align-self: flex-end;
        margin: 0 14px 16px auto;
    }

    /* formula bar */
    .formula-bar {
        flex: none;
        display: flex;
        align-items: center;
        margin: 0 12px 11px;
        font-size: 18px;
    }

    .box {
        height: 34px;
        box-sizing: border-box;
        display: flex;
        align-items: center;
        border: 1px solid #d0d0d0;
        border-radius: 5px;
        background: #fff;
        color: #333;
    }

    .box input {
        flex: 1;
        width: 0;
        min-width: 0;
    }

    .name-box {
        width: 152px;
        padding: 0 8px 0 6px;
    }

    .formula-bar .dots {
        margin: 0 13px;
    }

    .fx {
        width: 127px;
        justify-content: space-between;
        padding: 0 2px 0 9px;
        color: #999;
    }

    .function {
        font-family: "Liberation Serif", serif;
        font-size: 27px;
        line-height: 30px;
        font-style: italic;
    }

    .formula {
        flex: 1;
        margin-left: 7px;
        padding: 0 5px 0 15px;
    }

    /* grid */
    .workbook {
        flex: 1;
        min-height: 0;
        display: flex;
    }

    .sheet {
        position: relative;
        flex: 1;
        min-width: 0;
        overflow: hidden;
        border-right: 1px solid #dcdcdc;
    }

    table {
        table-layout: fixed;
        width: 1960px;
        border-collapse: separate;
        border-spacing: 0;
        background: #fff;
        color: #000;
        font-size: 19px;
    }

    th, td {
        box-sizing: border-box;
        height: 29px;
        padding: 0;
        line-height: 28px;
        border-right: 1px solid #dcdcdc;
        border-bottom: 1px solid #dcdcdc;
    }

    th {
        background: #efefef;
        font-weight: 400;
        border-color: #bdbdbd;
    }

    thead th {
        border-bottom-color: #999;
    }

    th:first-child {
        width: 40px;
        border-right-color: #999;
    }

    th.current {
        background: #d2d2d2;
        color: #185c37;
    }

    .corner svg {
        margin-left: 16px;
    }

    td {
        position: relative;
        padding-left: 3px;
    }

    td.warned::before {
        content: "";
        position: absolute;
        left: 0;
        top: 0;
        width: 9px;
        height: 9px;
        background: #078007;
        clip-path: polygon(0 0, 100% 0, 0 100%);
    }

    td.selected::before {
        content: "";
        position: absolute;
        z-index: 1;
        inset: -2px;
        border: 2px solid #1c7044;
    }

    td.selected::after {
        content: "";
        position: absolute;
        z-index: 2;
        right: -3px;
        bottom: -3px;
        width: 5px;
        height: 5px;
        border: solid #fff;
        border-width: 1px 0 0 1px;
        background: #1c7044;
    }

    /* annotation drawn over the cells */
    .pointer {
        position: absolute;
        left: 251px;
        top: 323px;
    }

    .scroll {
        display: flex;
        align-items: center;
        border-radius: 13px;
        background: #f5f5f5;
        fill: #6f6f6f;
    }

    .thumb {
        flex: 1;
        border-radius: 6px;
        background: #6f6f6f;
    }

    .vertical {
        width: 25px;
        flex: none;
        flex-direction: column;
        box-sizing: border-box;
        margin: 0 2px -3px 1px;
        padding: 8px 0;
        gap: 8px;
    }

    .vertical .thumb {
        width: 12px;
    }

    .vertical .end {
        margin-top: 23px;
    }

    /* sheet tabs */
    .sheet-tabs {
        height: 48px;
        flex: none;
        box-sizing: border-box;
        display: flex;
        align-items: center;
        padding: 0 27px 3px 15px;
        border-top: 1px solid #d9d9d9;
    }

    .arrow {
        width: 49px;
    }

    .sheet-tab {
        box-sizing: border-box;
        height: 43px;
        align-self: flex-start;
        align-items: flex-start;
        margin: -1px 5px 0 53px;
        padding: 0 11px;
        border: 1px solid #d9d9d9;
        border-top: 0;
        border-radius: 0 0 7px 7px;
        background: #fff;
        font-size: 19px;
        font-weight: 600;
    }

    .sheet-tab span {
        padding-top: 8px;
        line-height: 27px;
        border-bottom: 3px solid #107c41;
    }

    .tab-line {
        width: 1px;
        height: 28px;
        background: #ccc;
    }

    .add {
        margin-left: 63px;
    }

    .sheet-tabs .dots {
        margin-left: auto;
        margin-right: 22px;
    }

    .horizontal {
        width: 38%;
        height: 26px;
        box-sizing: border-box;
        padding: 0 8px;
        gap: 8px;
    }

    .horizontal .thumb {
        height: 12px;
        margin-right: 26px;
    }

    /* status bar */
    .status {
        height: 33px;
        flex: none;
        box-sizing: border-box;
        display: flex;
        align-items: center;
        padding: 0 12px 0 16px;
        border-top: 1px solid #c8c8c8;
        background: #f5f5f5;
        font-size: 15px;
    }

    .access {
        margin-left: 29px;
        gap: 3px;
    }

    .views {
        display: flex;
        height: 100%;
        margin-left: auto;
    }

    .views button {
        width: 60px;
    }

    .views button.active {
        background: #dedede;
    }

    .zoom {
        display: flex;
        align-items: center;
        gap: 8px;
        margin: 0 19px 0 8px;
    }

    .zoom input {
        appearance: none;
        width: 148px;
        height: 17px;
        background: linear-gradient(#666, #666) center / 100% 2px no-repeat;
    }

    .zoom input::-webkit-slider-thumb {
        appearance: none;
        width: 8px;
        height: 17px;
        background: #606060;
    }

    .taskbar {
        height: 2px;
        flex: none;
        display: flex;
        padding-left: 72px;
        background: #24142f;
    }

    .preview {
        width: 432px;
        background: #bdbdbd;
    }

    .glow {
        width: 73px;
        margin-left: 677px;
        background: #5c4a66;
    }
</style>
